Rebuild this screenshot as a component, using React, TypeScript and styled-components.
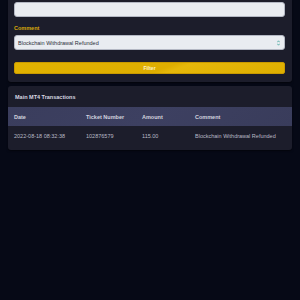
import React from 'react';
import styled, { createGlobalStyle } from 'styled-components';

const GlobalStyle = createGlobalStyle`
  html, body {
    margin: 0;
    padding: 0;
    background: #060916;
    font-family: "Liberation Sans", Arial, sans-serif;
  }
`;

const Page = styled.div`
  min-height: 300px;
  padding: 0 8px;
  display: flex;
  flex-direction: column;
  gap: 4px;
`;

const Card = styled.div<{ $top?: boolean }>`
  background: #1c1d2b;
  border-radius: ${(p) => (p.$top ? '0 0 3px 3px' : '3px')};
  box-shadow: 0 1px 2px rgba(0, 0, 0, 0.5);
  overflow: hidden;
`;

const FilterBody = styled.div`
  padding: 2px 7px 8px 6px;
  display: flex;
  flex-direction: column;
`;

const Label = styled.div`
  margin-top: 8px;
  color: #d9a90a;
  font-size: 5.5px;
  font-weight: 700;
  line-height: 7px;
  margin-bottom: 3px;
`;

const Field = styled.div`
  height: 15px;
  box-sizing: border-box;
  border: 1px solid #b4b8c4;
  border-radius: 3px;
  background: #e9ecf1;
  display: flex;
  align-items: center;
  justify-content: space-between;
  padding: 0 4px 0 3px;
  font-size: 5.5px;
  color: #2c2f3a;
`;

const FilterButton = styled.button`
  margin-top: 12px;
  height: 12px;
  border: 1px solid #c99a00;
  border-radius: 2px;
  background: linear-gradient(160deg, #e2b300 0%, #deae00 55%, #e6b80a 60%, #deaf00 100%);
  color: #fbf1c8;
  font-family: inherit;
  font-size: 5px;
  font-weight: 700;
  padding: 0;
`;

const Title = styled.div`
  height: 21px;
  display: flex;
  align-items: center;
  padding-left: 7px;
  color: #d6d7e0;
  font-size: 5.5px;
  font-weight: 700;
`;

const Row = styled.div<{ $head?: boolean }>`
  display: grid;
  grid-template-columns: 72px 56px 53px 1fr;
  height: 19px;
  align-items: center;
  background: ${(p) => (p.$head ? 'linear-gradient(135deg, #3a3d5d 0%, #3d4061 50%, #393c5b 100%)' : 'transparent')};
  color: ${(p) => (p.$head ? '#d2d3df' : '#b9bac6')};
  font-size: 5.5px;
  font-weight: ${(p) => (p.$head ? 700 : 400)};
`;

const Cell = styled.div`
  padding-left: 6px;
  white-space: nowrap;
`;

const TableBody = styled.div`
  padding-bottom: 5px;
`;

function SortIcon() {
  return (
    <svg width="3" height="6" viewBox="0 0 3 6">
      <path d="M0.3 2.3 L1.5 0.8 L2.7 2.3 M0.3 3.7 L1.5 5.2 L2.7 3.7" stroke="#3fa59a" strokeWidth="0.8" fill="none" />
    </svg>
  );
}

export default function App() {
  return (
    <>
      <GlobalStyle />
      <Page>
        <Card $top>
          <FilterBody>
            <Field />
            <Label>Comment</Label>
            <Field>
              <span>Blockchain Withdrawal Refunded</span>
              <SortIcon />
            </Field>
            <FilterButton>Filter</FilterButton>
          </FilterBody>
        </Card>
        <Card>
          <Title>Main MT4 Transactions</Title>
          <Row $head>
            <Cell>Date</Cell>
            <Cell>Ticket Number</Cell>
            <Cell>Amount</Cell>
            <Cell>Comment</Cell>
          </Row>
          <TableBody>
            <Row>
              <Cell>2022-08-18 08:32:38</Cell>
              <Cell>102876579</Cell>
              <Cell>115.00</Cell>
              <Cell>Blockchain Withdrawal Refunded</Cell>
            </Row>
          </TableBody>
        </Card>
      </Page>
    </>
  );
}
